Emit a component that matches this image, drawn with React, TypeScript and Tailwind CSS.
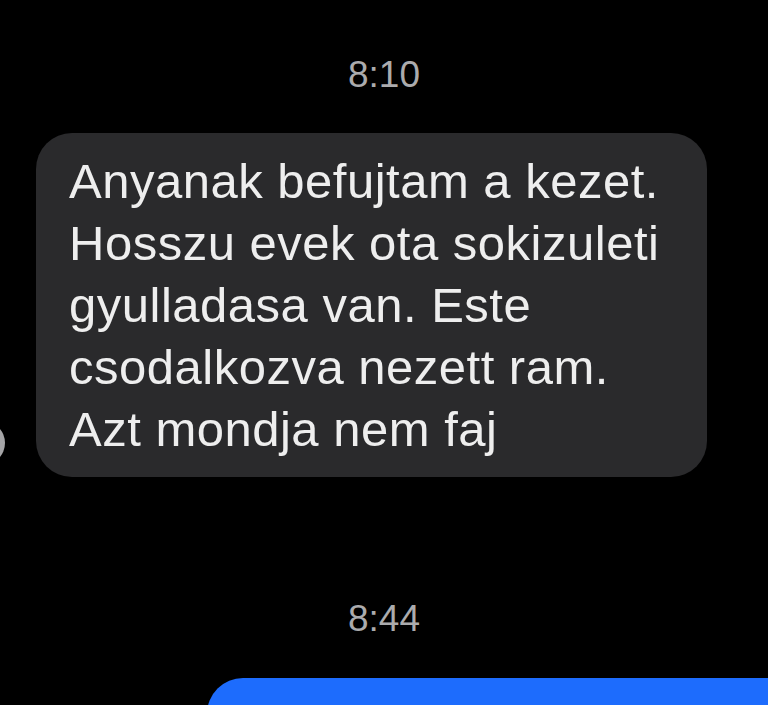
import React from 'react';

const lines = [
  'Anyanak befujtam a kezet.',
  'Hosszu evek ota sokizuleti',
  'gyulladasa van. Este',
  'csodalkozva nezett ram.',
  'Azt mondja nem faj',
];

const Stamp: React.FC<{ time: string; className?: string }> = ({ time, className }) => (
  <div className={`text-center text-[37px] leading-[37px] text-[#ababad] ${className ?? ''}`}>{time}</div>
);

const App: React.FC = () => {
  return (
    <div className="w-full h-[705px] bg-black overflow-hidden flex flex-col font-['Liberation_Sans',Arial,sans-serif]">
      <Stamp time="8:10" className="mt-[56px]" />

      <div className="mt-[40px] flex items-end">
        <div className="ml-[-39px] mb-[12px] w-[44px] h-[44px] rounded-full bg-[#a5a5a7] shrink-0" />
        <div className="ml-[31px] w-[671px] rounded-[36px] bg-[#2a2a2c] px-[33px] py-[17px] text-[49px] leading-[62px] tracking-[0.5px] text-[#eeeeee]">
          {lines.map((l) => (
            <div key={l} className="whitespace-nowrap">
              {l}
            </div>
          ))}
        </div>
      </div>

      <Stamp time="8:44" className="mt-[123px]" />

      <div className="mt-[41px] ml-[207px] h-[90px] w-[620px] shrink-0 rounded-[36px] bg-[#1d6cfd]" />
    </div>
  );
};

export default App;
